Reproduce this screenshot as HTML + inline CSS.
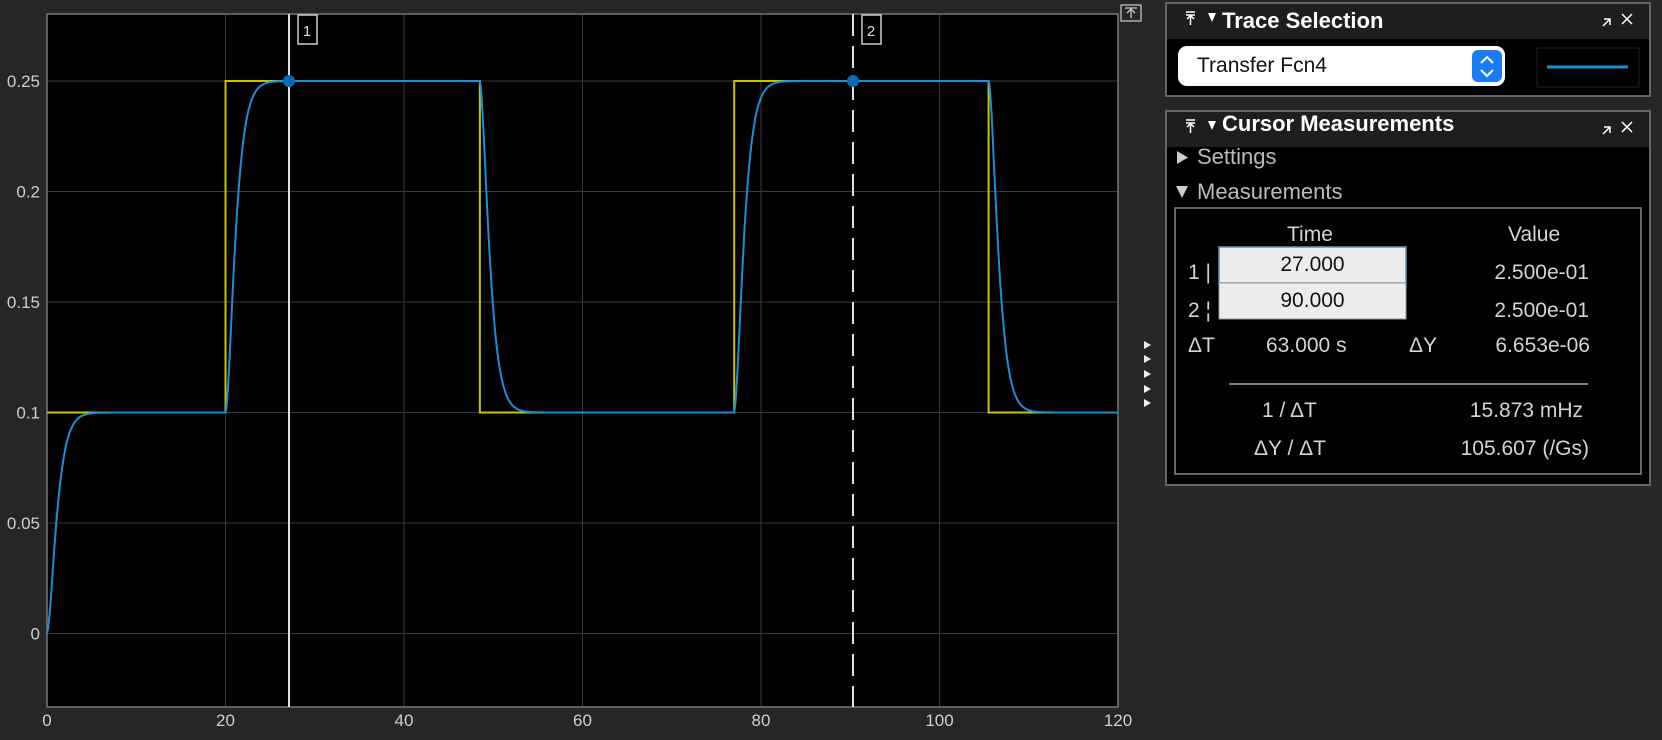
<!DOCTYPE html>
<html><head><meta charset="utf-8">
<style>
html,body{margin:0;padding:0;background:#262626;width:1662px;height:740px;overflow:hidden;font-family:"Liberation Sans",sans-serif;}
.abs{position:absolute}
.t{color:#d4d4d4;font-size:21px;line-height:24px;position:absolute;white-space:nowrap}
.hdr{color:#fff;font-weight:bold;font-size:22px}
</style></head><body>
<svg class="abs" style="left:0;top:0" width="1662" height="740" id="s">
<rect x="0" y="0" width="1662" height="740" fill="#262626"/>
<rect x="47" y="14" width="1071" height="693" fill="#000"/>
<g id="grid" stroke="#3a3a3a" stroke-width="1"></g>
<rect x="47" y="14" width="1071" height="693" fill="none" stroke="#777" stroke-width="1.5"/>
<g id="lab" fill="#cfcfcf" font-size="17" font-family="Liberation Sans"></g>
<path id="yel" fill="none" stroke="#c8c400" stroke-width="2"/>
<path id="blu" fill="none" stroke="#1a8fd6" stroke-width="2"/>
<line x1="289" y1="14" x2="289" y2="707" stroke="#e0e0e0" stroke-width="2"/>
<line x1="853" y1="14" x2="853" y2="707" stroke="#e0e0e0" stroke-width="2" stroke-dasharray="22,10"/>
<circle cx="289" cy="81" r="6" fill="#0a6cb0"/>
<circle cx="853" cy="81" r="6" fill="#0a6cb0"/>
<rect x="298" y="15" width="19" height="29" fill="#000" stroke="#ccc" stroke-width="1.5"/>
<text x="307" y="36" fill="#ddd" font-size="15" text-anchor="middle" font-family="Liberation Sans">1</text>
<rect x="862" y="15" width="19" height="29" fill="#000" stroke="#ccc" stroke-width="1.5"/>
<text x="871" y="36" fill="#ddd" font-size="15" text-anchor="middle" font-family="Liberation Sans">2</text>
<rect x="1121" y="5" width="20" height="16" fill="none" stroke="#ccc" stroke-width="1.2"/>
<path d="M1125 8h12M1131 18v-8M1127 13l4-4 4 4" stroke="#ccc" fill="none" stroke-width="1.3"/>
<g fill="#eee"><path d="M1144 341l7 4-7 4z"/><path d="M1144 355l7 4-7 4z"/><path d="M1144 370l7 4-7 4z"/><path d="M1144 385l7 4-7 4z"/><path d="M1144 399l7 4-7 4z"/></g>
<rect x="1166" y="3" width="484" height="93" fill="#000" stroke="#666" stroke-width="2"/>
<rect x="1167" y="4" width="482" height="35" fill="#1e1e1e"/>
<rect x="1178" y="46" width="327" height="40" rx="9" fill="#fff"/>
<rect x="1472" y="50" width="30" height="32" rx="6" fill="#1a7cf5"/>
<path d="M1481 63l6-6 6 6M1481 70l6 6 6-6" stroke="#fff" stroke-width="2" fill="none"/>
<rect x="1537" y="48" width="102" height="39" fill="#000" stroke="#222"/>
<line x1="1547" y1="67" x2="1628" y2="67" stroke="#1a8fd6" stroke-width="3"/>
<rect x="1166" y="111" width="484" height="374" fill="#000" stroke="#666" stroke-width="2"/>
<rect x="1167" y="112" width="482" height="35" fill="#1e1e1e"/>
<rect x="1175" y="208" width="466" height="266" fill="none" stroke="#888" stroke-width="1.5"/>
<rect x="1219" y="247" width="187" height="36" fill="#ececec" stroke="#6a8fb8" stroke-width="1.5"/>
<rect x="1219" y="283" width="187" height="36" fill="#ececec" stroke="#999" stroke-width="1"/>
<line x1="1229" y1="384" x2="1588" y2="384" stroke="#aaa" stroke-width="1.5"/>
<g fill="#ccc"><path d="M1177 151l11 6.5-11 6.5z"/><path d="M1176 186l12 0-6 12z"/></g>
<g fill="#fff"><path d="M1208 13l8 0-4 9z"/><path d="M1208 121l8 0-4 9z"/></g>
<g stroke="#fff" stroke-width="1.5" fill="none"><path d="M1186 12h9M1186 15h9M1190.5 15v10M1187 19l3.5-3.5 3.5 3.5"/><path d="M1186 120h9M1186 123h9M1190.5 123v10M1187 127l3.5-3.5 3.5 3.5"/>
<path d="M1603 26l7-7M1604 19h6v6M1622 14l10 10M1632 14l-10 10"/><path d="M1603 134l7-7M1604 127h6v6M1622 122l10 10M1632 122l-10 10"/></g>
</svg>
<div class="t hdr" style="left:1222px;top:9px">Trace Selection</div>
<div class="t" style="left:1197px;top:54px;color:#111;font-size:21px">Transfer Fcn4</div>
<div class="t hdr" style="left:1222px;top:112px">Cursor Measurements</div>
<div class="t" style="left:1197px;top:145px;font-size:22px;color:#bbb">Settings</div>
<div class="t" style="left:1197px;top:180px;font-size:22px;color:#bbb">Measurements</div>
<div class="t" style="left:1287px;top:223px">Time</div>
<div class="t" style="left:1508px;top:223px">Value</div>
<div class="t" style="left:1188px;top:261px">1 |</div>
<div class="t" style="left:1188px;top:299px">2 ¦</div>
<div class="t" style="left:1219px;top:253px;width:187px;text-align:center;color:#111">27.000</div>
<div class="t" style="left:1219px;top:289px;width:187px;text-align:center;color:#111">90.000</div>
<div class="t" style="right:73px;top:261px">2.500e-01</div>
<div class="t" style="right:73px;top:299px">2.500e-01</div>
<div class="t" style="left:1188px;top:334px">ΔT</div>
<div class="t" style="left:1266px;top:334px">63.000 s</div>
<div class="t" style="left:1409px;top:334px">ΔY</div>
<div class="t" style="right:72px;top:334px">6.653e-06</div>
<div class="t" style="left:1262px;top:399px">1 / ΔT</div>
<div class="t" style="right:79px;top:399px">15.873 mHz</div>
<div class="t" style="left:1254px;top:437px">ΔY / ΔT</div>
<div class="t" style="right:73px;top:437px">105.607 (/Gs)</div>
<script>
var X=function(t){return 47+t*8.925},Y=function(v){return 81+(0.25-v)*2210};
var g=document.getElementById('grid'),lab=document.getElementById('lab'),ns='http://www.w3.org/2000/svg';
function el(p,n,a,tx){var e=document.createElementNS(ns,n);for(var k in a)e.setAttribute(k,a[k]);if(tx)e.textContent=tx;p.appendChild(e);}
for(var i=0;i<=6;i++){var x=X(i*20);el(g,'line',{x1:x,y1:14,x2:x,y2:707});el(lab,'text',{x:x,y:726,'text-anchor':'middle'},String(i*20));}
var yl=['0','0.05','0.1','0.15','0.2','0.25'];
for(var j=0;j<6;j++){var y=Y(j*0.05);el(g,'line',{x1:47,y1:y,x2:1118,y2:y});el(lab,'text',{x:40,y:y+6,'text-anchor':'end'},yl[j]);}
var ed=[[0,0.1],[20,0.25],[48.5,0.1],[77,0.25],[105.5,0.1]];
function u(t){var v=0.1;for(var k=0;k<ed.length;k++)if(t>=ed[k][0])v=ed[k][1];return v;}
var d='M'+X(0)+' '+Y(0.1);
for(var k=1;k<ed.length;k++){d+=' L'+X(ed[k][0])+' '+Y(ed[k-1][1])+' L'+X(ed[k][0])+' '+Y(ed[k][1]);}
d+=' L'+X(120)+' '+Y(0.1);document.getElementById('yel').setAttribute('d',d);
var tau=0.65,dt=0.02,x1=0,x2=0,b='';
for(var t=0;t<=120;t+=dt){var s=u(t);x1+=dt*(s-x1)/tau;x2+=dt*(x1-x2)/tau;if(Math.round(t/dt)%5==0)b+=(b?' L':'M')+X(t).toFixed(1)+' '+Y(x2).toFixed(1);}
document.getElementById('blu').setAttribute('d',b);
</script>
</body></html>
